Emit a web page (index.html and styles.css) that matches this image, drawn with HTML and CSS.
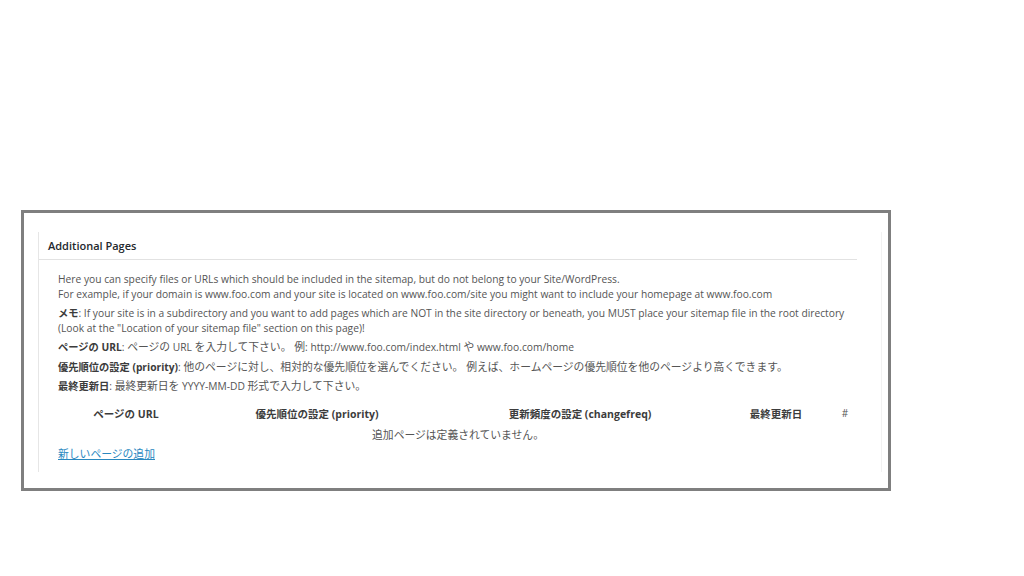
FILE: index.html
```html
<!DOCTYPE html>
<html lang="ja">
<head>
<meta charset="utf-8">
<title>Additional Pages</title>
<link rel="stylesheet" href="styles.css">
</head>
<body>
<div class="stage">
  <div class="frame">
    <div class="postbox">
      <h3 class="hndle">Additional Pages</h3>
      <div class="inside">
        <p class="para">Here you can specify files or URLs which should be included in the sitemap, but do not belong to your Site/WordPress.<br>For example, if your domain is www.foo.com and your site is located on www.foo.com/site you might want to include your homepage at www.foo.com</p>
        <p class="para"><b>メモ</b>: If your site is in a subdirectory and you want to add pages which are NOT in the site directory or beneath, you MUST place your sitemap file in the root directory<br>(Look at the "Location of your sitemap file" section on this page)!</p>
        <p class="para"><b>ページの URL</b>: <span class="ja">ページの</span> URL <span class="ja">を入力して下さい。 例</span>: http://www.foo.com/index.html <span class="ja">や</span> www.foo.com/home</p>
        <p class="para"><b>優先順位の設定 (priority)</b>: <span class="ja">他のページに対し、相対的な優先順位を選んでください。 例えば、ホームページの優先順位を他のページより高くできます。</span></p>
        <p class="para"><b>最終更新日</b>: <span class="ja">最終更新日を</span> YYYY-MM-DD <span class="ja">形式で入力して下さい。</span></p>
        <table class="pages">
          <thead>
            <tr>
              <th class="c-url">ページの URL</th>
              <th class="c-prio">優先順位の設定 (priority)</th>
              <th class="c-freq">更新頻度の設定 (changefreq)</th>
              <th class="c-date">最終更新日</th>
              <th class="c-num">#</th>
            </tr>
          </thead>
          <tbody>
            <tr><td colspan="5" class="empty"><span class="ja">追加ページは定義されていません。</span></td></tr>
          </tbody>
        </table>
        <a class="add" href="#"><span class="ja">新しいページの追加</span></a>
      </div>
    </div>
  </div>
</div>
</body>
</html>
```

FILE: styles.css
```css
html, body {
  margin: 0;
  padding: 0;
  background: #ffffff;
}
body {
  font-family: "Open Sans", "Noto Sans CJK JP", sans-serif;
  color: #555555;
}
.stage {
  padding: 210px 0 0 21px;
}
.frame {
  box-sizing: border-box;
  width: 870px;
  height: 281px;
  border: 3px solid #7f7f7f;
  padding: 19px 0 0 14px;
}
.postbox {
  box-sizing: border-box;
  width: 844px;
  height: 240px;
  border-left: 1px solid #e6e6e6;
  border-right: 1px solid #f2f2f2;
}
.hndle {
  margin: 0;
  width: 818px;
  height: 28px;
  box-sizing: border-box;
  padding: 6px 0 0 9px;
  font-size: 11px;
  font-weight: 600;
  color: #23282d;
  border-bottom: 1px solid #e2e2e2;
}
.inside {
  padding: 12px 0 0 19px;
  font-size: 10.25px;
}
.para {
  margin: 0 0 5px 0;
  line-height: 14.5px;
}
.para b {
  font-weight: 700;
  color: #3c3c3c;
}
.ja {
  font-size: 10.8px;
}
.pages {
  width: 800px;
  border-collapse: collapse;
  margin-top: 9px;
}
.pages th {
  font-size: 10.5px;
  font-weight: 700;
  color: #3c3c3c;
  text-align: center;
  padding: 0;
  height: 21px;
}
.c-url { width: 136px; }
.c-prio { width: 246px; }
.c-freq { width: 280px; }
.c-date { width: 112px; }
.pages th.c-num { width: 26px; font-weight: 400; font-size: 10px; color: #555555; }
.pages td.empty {
  text-align: center;
  padding: 0;
  height: 20px;
  font-size: 10.25px;
}
.add {
  display: inline-block;
  margin-top: 1px;
  font-size: 10.25px;
  color: #2a88bf;
  text-decoration: underline;
}
```
